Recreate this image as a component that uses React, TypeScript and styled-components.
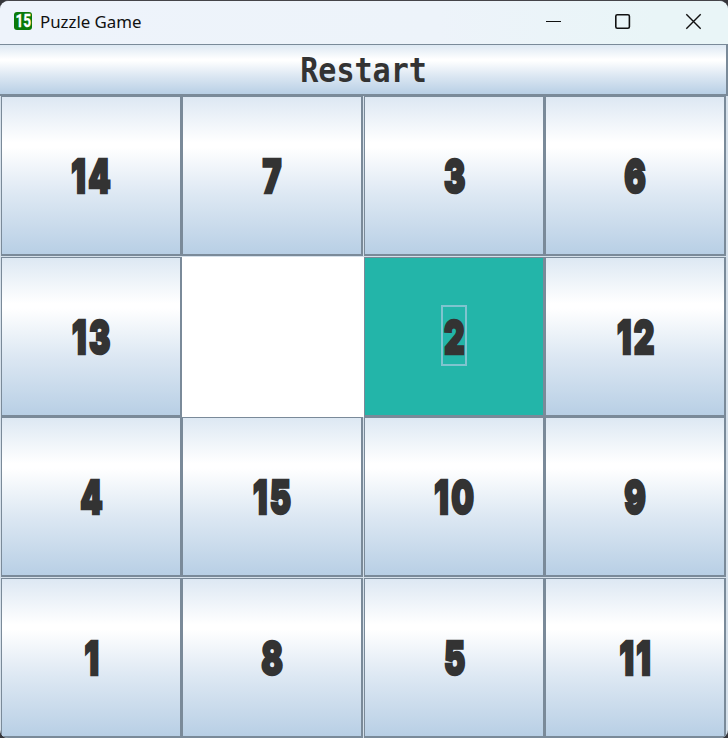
import React from "react";
import styled, { createGlobalStyle, css } from "styled-components";

const GlobalStyle = createGlobalStyle`
  body { margin: 0; background: #36363b; overflow: hidden; }
  * { box-sizing: border-box; }
`;

const metal = css`
  background: linear-gradient(180deg, #dde8f3 0%, #ffffff 29%, #ffffff 32%, #dde8f3 62%, #b8cfe5 100%);
`;

const Window = styled.main`
  width: 728px;
  height: 738px;
  display: flex;
  flex-direction: column;
  overflow: hidden;
  background: #d5e0ea;
  border-top: 1px solid #454449;
  border-radius: 9px 9px 8px 8px;
`;

const TitleBar = styled.header`
  height: 43px;
  flex: none;
  display: flex;
  align-items: center;
  padding-left: 14px;
  background: linear-gradient(90deg, #eef3fb 0%, #edf3fa 60%, #e9f5f7 90%);
`;

const AppIcon = styled.span`
  width: 18px;
  height: 18px;
  margin-top: -3px;
  display: flex;
  align-items: center;
  justify-content: center;
  border-radius: 3px;
  background: #0a7a0a;
  color: #fff;
  font: 700 18px/18px Roboto, sans-serif;
`;

const IconDigits = styled.span`
  transform: scaleX(0.76);
  -webkit-text-stroke: 0.3px #fff;
`;

const Title = styled.h1`
  margin: 0 0 2px 8px;
  flex: 1;
  color: #111;
  font: 400 17px/24px "Noto Sans", sans-serif;
`;

const TitleText = styled.span`
  display: inline-block;
  transform: scaleX(0.99);
  transform-origin: left;
`;

const Controls = styled.div`
  display: flex;
  align-items: center;
  gap: 53px;
  padding: 0 26px 3px 0;
`;

const Restart = styled.button`
  ${metal}
  height: 52px;
  flex: none;
  padding: 0;
  border: solid #7a8a99;
  border-width: 1px 2px 2px 0;
  color: #333;
  font: 700 33px/49px "DejaVu Sans Mono", monospace;
`;

const RestartText = styled.span`
  display: inline-block;
  transform: translate(1px, 1px) scaleX(0.91);
`;

const Board = styled.section`
  display: grid;
  grid-template-columns: 181px 182px 181px 181px;
  grid-template-rows: 161px 160px 161px 160px;
  padding-left: 1px;
`;

const Tile = styled.button<{ $active?: boolean }>`
  ${metal}
  ${(p) => p.$active && "background: #23b5a9;"}
  width: 181px;
  height: 160px;
  padding: 0;
  display: flex;
  align-items: center;
  justify-content: center;
  border: solid #7a8a99;
  border-width: 1px 2px 2px 1px;
  color: #333;
`;

const Blank = styled.div`
  background: #fff;
  height: 160px;
`;

const Label = styled.span<{ $focused?: boolean }>`
  height: 61px;
  width: ${(p) => (p.$focused ? "26px" : "auto")};
  display: flex;
  justify-content: center;
  margin-bottom: 3px;
  border: 2px solid ${(p) => (p.$focused ? "#7fc4cf" : "transparent")};
`;

const Digits = styled.span`
  font: 900 47px/61px Inter, sans-serif;
  letter-spacing: 3.5px;
  -webkit-text-stroke: 2.6px #333;
  transform: translate(1.5px, -1px) scaleX(0.68);
`;

const tiles = [14, 7, 3, 6, 13, 0, 2, 12, 4, 15, 10, 9, 1, 8, 5, 11];

export default function App() {
  return (
    <>
      <GlobalStyle />
      <Window>
        <TitleBar>
          <AppIcon><IconDigits>15</IconDigits></AppIcon>
          <Title><TitleText>Puzzle Game</TitleText></Title>
          <Controls>
            <svg width="17" height="17" fill="none" stroke="#111" strokeWidth="1.2">
              <path d="M1 8.5H16" />
            </svg>
            <svg width="17" height="17" fill="none" stroke="#111" strokeWidth="1.6">
              <rect x="0.8" y="1.7" width="13.6" height="13.6" rx="1.5" />
            </svg>
            <svg width="17" height="17" fill="none" stroke="#111" strokeWidth="1.4">
              <path d="M1.3 1.3L15.7 15.7M15.7 1.3L1.3 15.7" />
            </svg>
          </Controls>
        </TitleBar>
        <Restart><RestartText>Restart</RestartText></Restart>
        <Board>
          {tiles.map((n) =>
            n === 0 ? (
              <Blank key={n} />
            ) : (
              <Tile key={n} $active={n === 2}>
                <Label $focused={n === 2}>
                  <Digits>{n}</Digits>
                </Label>
              </Tile>
            )
          )}
        </Board>
      </Window>
    </>
  );
}
